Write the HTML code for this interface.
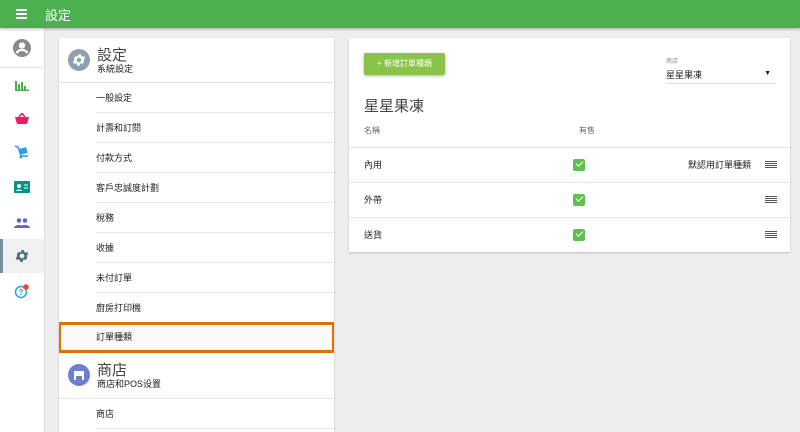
<!DOCTYPE html>
<html style="overflow:hidden;height:432px"><head><meta charset="utf-8"><style>
*{box-sizing:border-box;margin:0;padding:0}
body{width:800px;height:432px;overflow:hidden;background:#eeeeee;font-family:"Liberation Sans","Noto Sans CJK TC",sans-serif;color:#222;position:relative}
.top{position:absolute;left:0;top:0;width:800px;height:28px;background:#4caf50;box-shadow:0 1px 3px rgba(0,0,0,.3);z-index:2}
.top .t{position:absolute;left:45px;top:5px;color:#fff;font-size:13px}
.ham{position:absolute;left:16px;top:9px;width:11px;height:1.5px;background:#fff;box-shadow:0 4px 0 #fff,0 8px 0 #fff}
.side{position:absolute;left:0;top:28px;width:45px;height:404px;background:#fff;border-right:1px solid #ddd}
.ic{position:absolute;left:0;width:44px;text-align:center}
.card{position:absolute;background:#fff;box-shadow:0 1px 2px rgba(0,0,0,.2)}
.hd{position:absolute;left:0;width:275px;height:45px;border-bottom:1px solid #e5e5e5}
.circ{position:absolute;left:9px;top:11px;width:22px;height:22px;border-radius:50%}
.h1{position:absolute;left:38px;top:6px;font-size:15px;color:#444}
.h2{position:absolute;left:38px;top:24px;font-size:9px;color:#222}
.it{position:absolute;left:37px;width:238px;height:30px;border-bottom:1px solid #e8e8e8;font-size:9px;line-height:30px;padding-left:0}
.row{position:absolute;left:0;width:441px;height:35px;border-top:1px solid #e5e5e5;font-size:9px;line-height:34px}
.cb{position:absolute;left:224px;top:11px;width:12px;height:12px;background:#5fc14b;border-radius:2px}
.cb:after{content:"";position:absolute;left:3px;top:2px;width:6px;height:3px;border-left:1.2px solid #fff;border-bottom:1.2px solid #fff;transform:rotate(-45deg)}
.dr{position:absolute;left:416px;top:13px;width:12px;height:1px;background:#555;box-shadow:0 2px 0 #555,0 4px 0 #555,0 6px 0 #555}
</style></head><body>
<div class="top"><div class="ham"></div><div class="t">設定</div></div>
<div class="side">
 <div class="ic" style="top:10px"><svg width="20" height="20" viewBox="0 0 20 20"><circle cx="10" cy="10" r="9" fill="#8a8a8a"/><circle cx="10" cy="7.5" r="3.2" fill="#fff"/><path d="M4.5 15c1.5-2.5 3.5-3 5.5-3s4 .5 5.5 3" stroke="#fff" stroke-width="2.2" fill="none"/></svg></div>
 <div style="position:absolute;left:0;top:39px;width:44px;border-top:1px solid #e5e5e5"></div>
 <div class="ic" style="top:50px"><svg width="14" height="12"><path d="M1 2v10M4 5v7M7 3v9M10 7v5M0 11.5h14" stroke="#4caf50" stroke-width="2"/></svg></div>
 <div class="ic" style="top:84px"><svg width="14" height="12"><path d="M4 4L7 0L10 4" stroke="#e91e63" fill="none" stroke-width="1.5"/><path d="M0 4h14l-2 7H2z" fill="#e91e63"/></svg></div>
 <div class="ic" style="top:117px"><svg width="16" height="14"><path d="M1 1l3 1 3 9h7" stroke="#29a0e0" fill="none" stroke-width="1.5"/><rect x="6" y="3" width="7" height="6" fill="#29a0e0" transform="rotate(-15 9 6)"/><circle cx="7" cy="12" r="1.5" fill="#29a0e0"/></svg></div>
 <div class="ic" style="top:152px"><svg width="16" height="12"><rect width="16" height="12" rx="1" fill="#009688"/><circle cx="5" cy="5" r="2" fill="#fff"/><path d="M2 10c0-2 6-2 6 0z" fill="#fff"/><path d="M10 4h4M10 7h4" stroke="#fff"/></svg></div>
 <div class="ic" style="top:187px"><svg width="16" height="10"><circle cx="5" cy="2.5" r="2.3" fill="#5c6bc0"/><circle cx="11" cy="2.5" r="2.3" fill="#5c6bc0"/><path d="M0 10c0-4 10-4 10 0zM6 10c0-4 10-4 10 0z" fill="#5c6bc0"/></svg></div>
 <div style="position:absolute;left:0;top:211px;width:44px;height:34px;background:#f0f0f0;border-left:3px solid #78909c"></div>
 <div class="ic" style="top:220px"><svg width="16" height="16" viewBox="0 0 24 24"><path fill="#546e7a" d="M19.4 13a7.5 7.5 0 000-2l2.1-1.6-2-3.5-2.5 1a7.5 7.5 0 00-1.700-1l-.4-2.7h-4l-.4 2.7a7.5 7.5 0 00-1.7 1l-2.5-1-2 3.5L4.6 11a7.5 7.5 0 000 2l-2.1 1.6 2 3.5 2.5-1a7.5 7.5 0 001.7 1l.4 2.7h4l.4-2.7a7.5 7.5 0 001.7-1l2.5 1 2-3.5zM12 15.5a3.5 3.5 0 110-7 3.5 3.5 0 010 7z"/></svg></div>
 <div class="ic" style="top:255px"><svg width="18" height="16"><circle cx="8" cy="9" r="5.5" stroke="#29a0e0" stroke-width="1.5" fill="none"/><text x="8" y="12" font-size="8" text-anchor="middle" fill="#29a0e0" font-family="Liberation Sans" font-weight="bold">?</text><circle cx="13" cy="4" r="2.8" fill="#f44336"/></svg></div>
</div>

<div class="card" style="left:59px;top:38px;width:275px;height:394px;overflow:hidden">
 <div class="hd" style="top:0"><div class="circ" style="background:#8fa0ad"><svg width="22" height="22" viewBox="-5 -5 34 34"><path fill="#fff" d="M19.4 13a7.5 7.5 0 000-2l2.1-1.6-2-3.5-2.5 1a7.5 7.5 0 00-1.7-1l-.4-2.7h-4l-.4 2.7a7.5 7.5 0 00-1.7 1l-2.5-1-2 3.5L4.6 11a7.5 7.5 0 000 2l-2.1 1.6 2 3.5 2.5-1a7.5 7.5 0 001.7 1l.4 2.7h4l.4-2.7a7.5 7.5 0 001.7-1l2.5 1 2-3.5zM12 15.5a3.5 3.5 0 110-7 3.5 3.5 0 010 7z"/></svg></div><div class="h1">設定</div><div class="h2">系統設定</div></div>
 <div class="it" style="top:45px">一般設定</div>
 <div class="it" style="top:75px">計壽和訂閱</div>
 <div class="it" style="top:105px">付款方式</div>
 <div class="it" style="top:135px">客戶忠誠度計劃</div>
 <div class="it" style="top:165px">稅務</div>
 <div class="it" style="top:195px">收據</div>
 <div class="it" style="top:225px">未付訂單</div>
 <div class="it" style="top:255px">廚房打印機</div>
 <div style="position:absolute;left:-1px;top:284px;width:277px;height:31px;border:3px solid #e07000;background:#fafafa;font-size:9px;line-height:25px;padding-left:35px">訂單種類</div>
 <div class="hd" style="top:315px;height:46px"><div class="circ" style="background:#6f7fcf"><svg width="22" height="22"><rect x="6" y="7" width="10" height="3" fill="#fff"/><rect x="6" y="10" width="10" height="6" fill="#fff"/><rect x="8" y="12" width="6" height="4" fill="#6f7fcf"/></svg></div><div class="h1">商店</div><div class="h2">商店和POS设置</div></div>
 <div class="it" style="top:361px">商店</div>
</div>

<div class="card" style="left:349px;top:38px;width:441px;height:214px">
 <div style="position:absolute;left:15px;top:15px;width:81px;height:22px;background:#8bc34a;color:#fff;font-size:8px;line-height:22px;text-align:center;border-radius:2px;box-shadow:0 1px 3px rgba(0,0,0,.3)">+ 新增訂單種類</div>
 <div style="position:absolute;left:317px;top:18px;font-size:6px;color:#888">商店</div>
 <div style="position:absolute;left:317px;top:30px;width:110px;height:16px;border-bottom:1px solid #ddd;font-size:9px">星星果凍<span style="position:absolute;right:5px;top:2px;font-size:7px">▼</span></div>
 <div style="position:absolute;left:15px;top:57px;font-size:15px;color:#444">星星果凍</div>
 <div style="position:absolute;left:15px;top:87px;font-size:8px;color:#666">名稱</div>
 <div style="position:absolute;left:230px;top:87px;font-size:8px;color:#666">有售</div>
 <div class="row" style="top:109px"><span style="position:absolute;left:15px">內用</span><div class="cb"></div><span style="position:absolute;right:39px">默認用訂單種類</span><div class="dr"></div></div>
 <div class="row" style="top:144px"><span style="position:absolute;left:15px">外帶</span><div class="cb"></div><div class="dr"></div></div>
 <div class="row" style="top:179px"><span style="position:absolute;left:15px">送貨</span><div class="cb"></div><div class="dr"></div></div>
</div>
</body></html>
